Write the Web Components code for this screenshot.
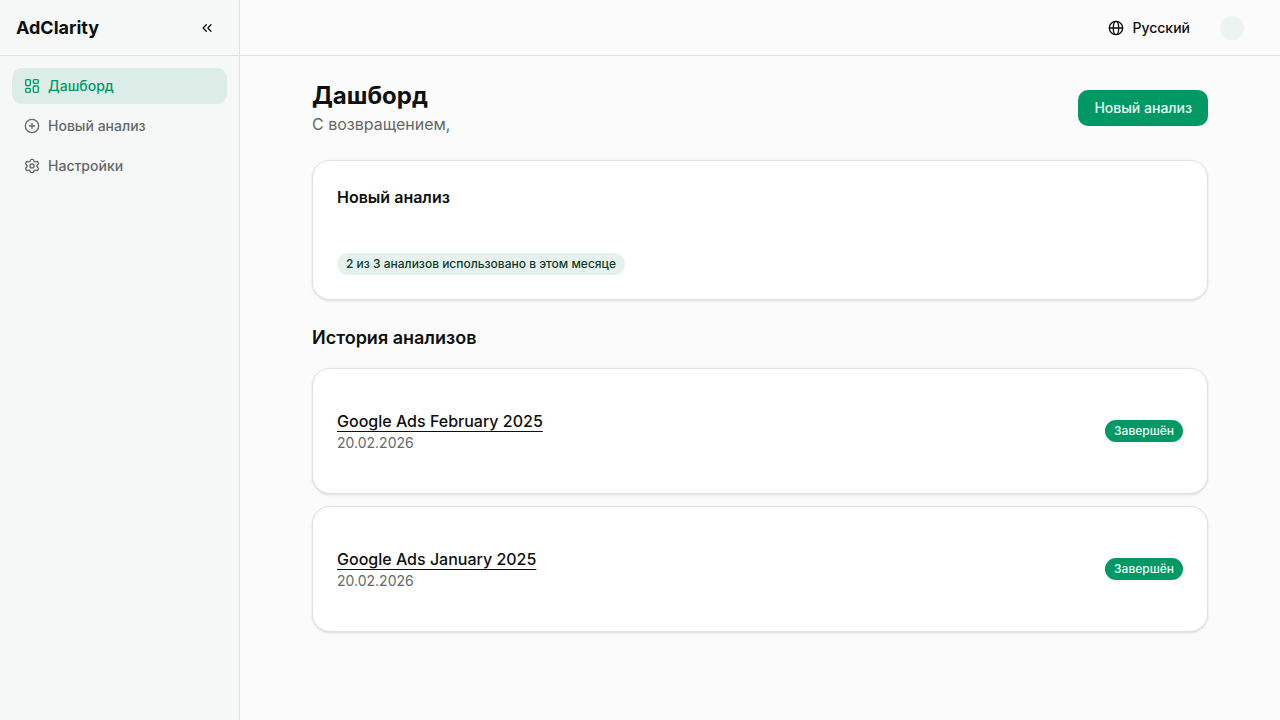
<!DOCTYPE html>
<html lang="ru">
<head>
<meta charset="utf-8">
<meta name="viewport" content="width=device-width, initial-scale=1">
<title>AdClarity</title>
<style>
  :root {
    --bg: #fafbfa;
    --sidebar: #f5f8f7;
    --border: #dfe2e1;
    --text: #0c100e;
    --muted: #646967;
    --primary: #009966;
    --on-primary: #ecfdf5;
    --tint: #dbede6;
    --soft: #e4f1ec;
    --on-soft: #123b2c;
  }
  body {
    margin: 0;
    background: var(--bg);
    color: var(--text);
    font-family: Inter, "Liberation Sans", sans-serif;
    font-size: 16px;
    line-height: 24px;
  }
</style>
</head>
<body>
<app-shell>
  <app-sidebar slot="sidebar">
    <nav-item icon="dashboard" href="#dashboard" active>Дашборд</nav-item>
    <nav-item icon="plus" href="#new">Новый анализ</nav-item>
    <nav-item icon="settings" href="#settings">Настройки</nav-item>
  </app-sidebar>
  <top-bar slot="header">Русский</top-bar>
  <page-heading>
    <span slot="title">Дашборд</span>
    <span slot="subtitle">С возвращением,</span>
    <primary-button slot="action">Новый анализ</primary-button>
  </page-heading>
  <usage-card>
    <span slot="title">Новый анализ</span>
    <status-badge variant="soft">2 из 3 анализов использовано в этом месяце</status-badge>
  </usage-card>
  <analysis-history>
    <span slot="title">История анализов</span>
    <analysis-card href="#february" date="20.02.2026" status="Завершён">Google Ads February 2025</analysis-card>
    <analysis-card href="#january" date="20.02.2026" status="Завершён">Google Ads January 2025</analysis-card>
  </analysis-history>
</app-shell>

<script>
const gearHalf = 'M19.5 12C19.5 11.5 19.7 10.95 20 10.63L21.07 9.48C21.54 8.96 21.77 8.7 21.8 8.38C21.84 8.05 21.67 7.75 21.32 7.14L20.82 6.28C20.45 5.64 20.26 5.31 19.95 5.18C19.63 5.05 19.27 5.16 18.55 5.36L17.33 5.7C16.87 5.81 16.39 5.75 15.97 5.53L15.64 5.34C15.28 5.11 15 4.77 14.85 4.37L14.51 3.38C14.29 2.72 14.18 2.39 13.92 2.2C13.66 2 13.31 2 12.62 2H11.5C10.81 2 10.46 2 10.2 2.2C9.94 2.39 9.83 2.72 9.61 3.38L9.28 4.37C9.12 4.77 8.85 5.11 8.49 5.34L8.15 5.53C7.73 5.75 7.25 5.81 6.79 5.7L5.57 5.36C4.86 5.16 4.5 5.05 4.18 5.18C3.86 5.31 3.67 5.64 3.3 6.28L2.81 7.14C2.46 7.75 2.28 8.05 2.32 8.38C2.35 8.7 2.58 8.96 3.05 9.48L4.08 10.63C4.34 10.95 4.52 11.5 4.52 12';
const icons = {
  dashboard: '<rect x="2.5" y="2.5" width="7" height="9" rx="1.6"/><rect x="14" y="2.5" width="7.5" height="5.5" rx="1.6"/><rect x="2.5" y="15.5" width="7" height="6" rx="1.6"/><rect x="14" y="12" width="7.5" height="9.5" rx="1.6"/>',
  plus: '<circle cx="12" cy="12" r="10"/><path d="M8 12h8M12 8v8"/>',
  settings: `<path d="${gearHalf}"/><path transform="matrix(1 0 0 -1 0 24)" d="${gearHalf}"/><circle cx="12" cy="12" r="3"/>`,
  collapse: '<path d="m11 17-4.2-4.2a1.1 1.1 0 0 1 0-1.6L11 7M18 17l-4.2-4.2a1.1 1.1 0 0 1 0-1.6L18 7"/>',
  globe: '<circle cx="12" cy="12" r="10"/><ellipse cx="12" cy="12" rx="4" ry="10"/><path d="M2 12h20"/>'
};

function define(name, render) {
  customElements.define(name, class extends HTMLElement {
    constructor() {
      super();
      this.attachShadow({ mode: 'open' });
    }
    connectedCallback() {
      this.shadowRoot.innerHTML = '<style>*{box-sizing:border-box}:host{display:block;box-sizing:border-box}</style>' + render(this);
    }
  });
}

define('ui-icon', el => `
  <style>
    :host { flex: none; width: 16px; height: 16px; }
    svg { display: block; width: 100%; height: 100%; fill: none; stroke: currentColor; stroke-width: 2; stroke-linecap: round; stroke-linejoin: round; }
  </style>
  <svg viewBox="0 0 24 24" aria-hidden="true">${icons[el.getAttribute('name')]}</svg>`);

define('app-shell', () => `
  <style>
    :host { display: grid; grid-template-columns: 240px minmax(0, 1fr); min-height: 100vh; }
    .body { display: flex; flex-direction: column; }
    main { padding: 24px; }
    .content { display: flex; flex-direction: column; gap: 24px; max-width: 896px; margin: 0 auto; }
  </style>
  <slot name="sidebar"></slot>
  <div class="body">
    <slot name="header"></slot>
    <main><div class="content"><slot></slot></div></main>
  </div>`);

define('app-sidebar', () => `
  <style>
    :host { background: var(--sidebar); border-right: 1px solid var(--border); }
    header { display: flex; align-items: center; justify-content: space-between; height: 56px; padding: 0 16px; border-bottom: 1px solid var(--border); }
    .brand { font-size: 18px; line-height: 28px; font-weight: 700; }
    button { display: grid; place-items: center; width: 32px; height: 32px; padding: 0; border: 0; border-radius: 10px; background: none; color: inherit; }
    nav { display: flex; flex-direction: column; gap: 4px; padding: 12px; }
  </style>
  <header>
    <span class="brand">AdClarity</span>
    <button type="button" aria-label="Свернуть меню"><ui-icon name="collapse"></ui-icon></button>
  </header>
  <nav><slot></slot></nav>`);

define('nav-item', el => `
  <style>
    a { display: flex; align-items: center; gap: 8px; padding: 8px 12px; border-radius: 10px; color: var(--muted); font-size: 14px; line-height: 20px; font-weight: 500; text-decoration: none; }
    :host([active]) a { background: var(--tint); color: var(--primary); }
  </style>
  <a href="${el.getAttribute('href')}"><ui-icon name="${el.getAttribute('icon')}"></ui-icon><span><slot></slot></span></a>`);

define('top-bar', () => `
  <style>
    :host { display: flex; align-items: center; justify-content: flex-end; gap: 20px; height: 56px; padding: 0 36px; border-bottom: 1px solid var(--border); }
    button { display: flex; align-items: center; gap: 8px; height: 32px; padding: 0 10px; border: 0; background: none; color: inherit; font: 500 14px/20px Inter, "Liberation Sans", sans-serif; }
    .avatar { width: 24px; height: 24px; border-radius: 50%; background: #edf3f1; }
  </style>
  <button type="button"><ui-icon name="globe"></ui-icon><span><slot></slot></span></button>
  <div class="avatar"></div>`);

define('primary-button', () => `
  <style>
    button { display: block; padding: 8px 16px; border: 0; border-radius: 10px; background: var(--primary); color: var(--on-primary); font: 500 14px/20px Inter, "Liberation Sans", sans-serif; }
  </style>
  <button type="button"><slot></slot></button>`);

define('page-heading', () => `
  <style>
    :host { display: flex; align-items: center; justify-content: space-between; }
    h1, p { margin: 0; }
    h1 { font-size: 24px; line-height: 32px; font-weight: 700; }
    p { color: var(--muted); }
  </style>
  <div><h1><slot name="title"></slot></h1><p><slot name="subtitle"></slot></p></div>
  <slot name="action"></slot>`);

define('ui-card', () => `
  <style>
    :host { padding: 24px; border: 1px solid var(--border); border-radius: 18px; background: #fff; box-shadow: 0 1px 3px rgb(0 0 0 / .1), 0 1px 2px -1px rgb(0 0 0 / .1); }
  </style>
  <slot></slot>`);

define('status-badge', el => `
  <style>
    :host { display: inline-flex; flex: none; padding: 2px 8px; border: 1px solid transparent; border-radius: 11px; background: var(--primary); color: var(--on-primary); font-size: 12px; line-height: 16px; font-weight: 500; white-space: nowrap; }
    :host([variant=soft]) { background: var(--soft); color: var(--on-soft); }
  </style>
  <slot></slot>`);

define('usage-card', () => `
  <style>
    .stack { display: flex; flex-direction: column; align-items: flex-start; gap: 44px; }
    h2 { margin: 0; font-size: 16px; line-height: 24px; font-weight: 600; }
  </style>
  <ui-card><div class="stack"><h2><slot name="title"></slot></h2><slot></slot></div></ui-card>`);

define('analysis-history', () => `
  <style>
    h2 { margin: 0 0 16px; font-size: 18px; line-height: 28px; font-weight: 600; }
    .list { display: flex; flex-direction: column; gap: 12px; }
  </style>
  <h2><slot name="title"></slot></h2>
  <div class="list"><slot></slot></div>`);

define('analysis-card', el => `
  <style>
    .row { display: flex; align-items: center; justify-content: space-between; gap: 16px; padding: 16px 0; }
    a { color: inherit; font-weight: 500; text-decoration: underline; text-underline-offset: 4px; text-decoration-skip-ink: none; }
    p { margin: 0; color: var(--muted); font-size: 14px; line-height: 20px; }
  </style>
  <ui-card><div class="row">
    <div><a href="${el.getAttribute('href')}"><slot></slot></a><p>${el.getAttribute('date')}</p></div>
    <status-badge>${el.getAttribute('status')}</status-badge>
  </div></ui-card>`);
</script>
</body>
</html>
